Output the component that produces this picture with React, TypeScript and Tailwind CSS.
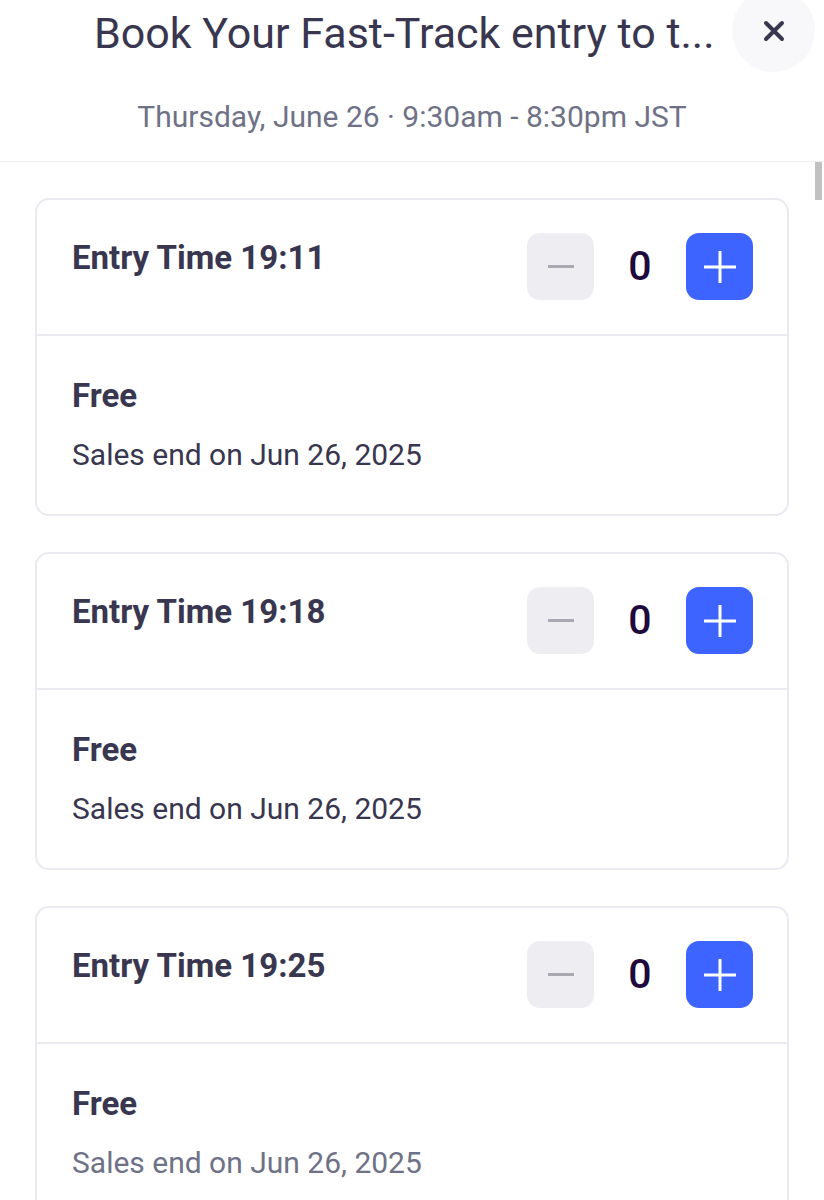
import React from "react";

const font = { fontFamily: "Roboto, 'Noto Sans', sans-serif" };

function Card({ time, salesGray }: { time: string; salesGray?: boolean }) {
  return (
    <div className="w-[754px] rounded-[14px] border-2 border-[#ebeaf0] bg-white">
      <div className="flex items-start justify-between pl-[35px] pr-[34px] pt-[33px] pb-[34px] border-b-2 border-[#ebeaf0]">
        <div className="text-[33px] leading-[50px] font-bold text-[#39364f]">
          Entry Time {time}
        </div>
        <div className="flex items-center">
          <button className="w-[67px] h-[67px] rounded-[13px] bg-[#eeedf2] flex items-center justify-center">
            <span className="block w-[26px] h-[3px] bg-[#a9a8b3]" />
          </button>
          <div className="w-[92px] text-center text-[41px] font-medium text-[#1e0a3c]">0</div>
          <button className="w-[67px] h-[67px] rounded-[13px] bg-[#3d64ff] flex items-center justify-center">
            <svg width="34" height="34" viewBox="0 0 34 34">
              <path d="M17 1 V33 M1 17 H33" stroke="#fff" strokeWidth="3" />
            </svg>
          </button>
        </div>
      </div>
      <div className="pl-[35px] pt-[40px] pb-[41px]">
        <div className="text-[33px] leading-[40px] font-bold text-[#39364f]">Free</div>
        <div
          className={`mt-[21px] text-[30px] leading-[36px] ${salesGray ? "text-[#6f7287]" : "text-[#39364f]"}`}
        >
          Sales end on Jun 26, 2025
        </div>
      </div>
    </div>
  );
}

export default function App() {
  return (
    <div className="w-[824px] h-[1200px] overflow-hidden bg-white relative" style={font}>
      <div className="relative h-[162px] border-b border-[#eeedf2]">
        <div className="pt-[8px] pl-[94px] text-[43px] leading-[50px] text-[#39364f] whitespace-nowrap">
          Book Your Fast-Track entry to t...
        </div>
        <div className="mt-[41px] text-center text-[30px] leading-[36px] text-[#6f7287] pr-[0px]">
          Thursday, June 26 · 9:30am - 8:30pm JST
        </div>
        <button className="absolute left-[732px] top-[-11px] w-[83px] h-[83px] rounded-full bg-[#f8f7fa] flex items-center justify-center">
          <svg width="22" height="22" viewBox="0 0 22 22">
            <path d="M3 3 L19 19 M19 3 L3 19" stroke="#39364f" strokeWidth="4" strokeLinecap="round" />
          </svg>
        </button>
      </div>
      <div className="flex">
        <div className="flex-1 flex flex-col gap-[36px] pl-[35px] pt-[36px]">
          <Card time="19:11" />
          <Card time="19:18" />
          <Card time="19:25" salesGray />
        </div>
        <div className="w-[9px] shrink-0">
          <div className="h-[38px] w-[7px] bg-[#c1c1c1]" />
        </div>
      </div>
    </div>
  );
}
